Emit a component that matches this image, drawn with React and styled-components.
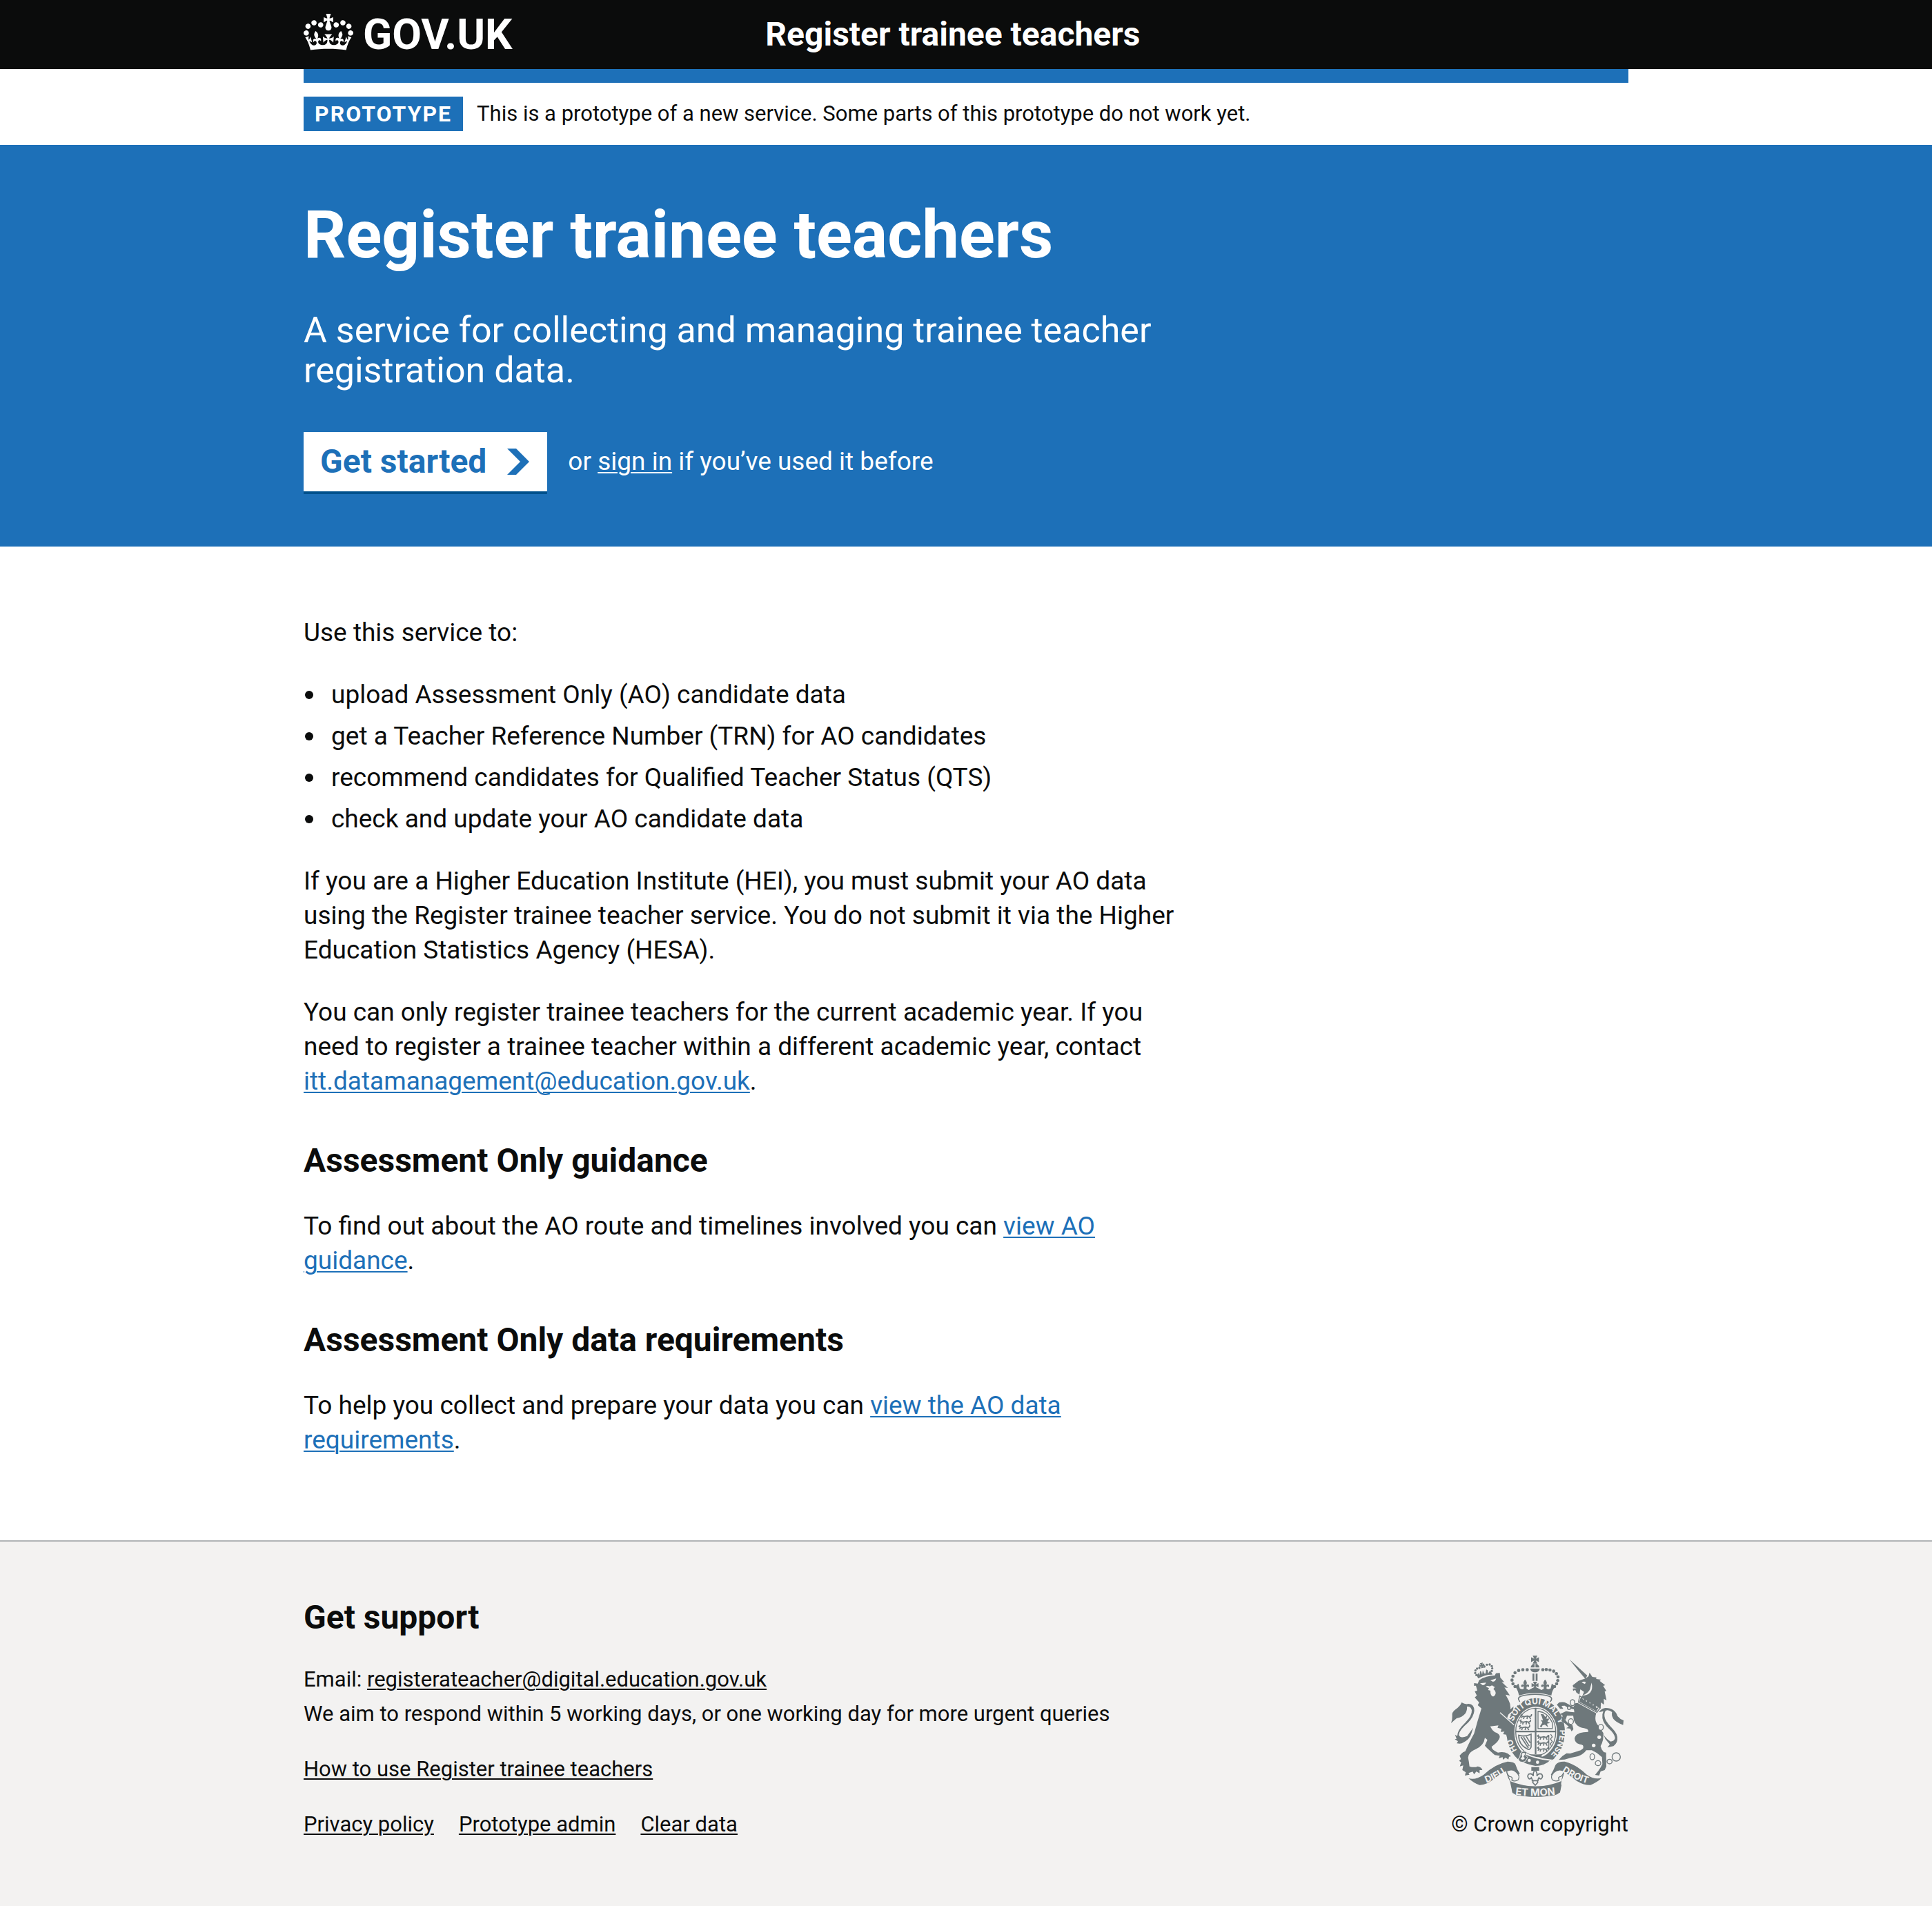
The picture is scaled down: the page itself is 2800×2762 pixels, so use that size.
import React from 'react';
import styled, { createGlobalStyle, css } from 'styled-components';

const color = {
  ink: '#0b0c0c',
  white: '#ffffff',
  blue: '#1d70b8',
  buttonShadow: '#00508c',
  footer: '#f3f2f1',
  border: '#b1b4b6',
  crest: '#6e787b',
};

const GlobalStyle = createGlobalStyle`
  *, *::before, *::after {
    box-sizing: border-box;
  }
  body {
    margin: 0;
    background: ${color.white};
    color: ${color.ink};
    font-family: Roboto, 'Liberation Sans', sans-serif;
    font-size: 37px;
    line-height: 50px;
  }
`;

const Page = styled.div`
  display: flex;
  flex-direction: column;
  min-height: 100vh;
`;

const Container = styled.div`
  max-width: 1920px;
  margin: 0 auto;

  @media (max-width: 2000px) {
    margin: 0 40px;
  }
`;

const Column = styled.div`
  max-width: 1280px;
`;

const linkColor = {
  body: color.blue,
  inverse: color.white,
  footer: color.ink,
};

const Link = styled.a`
  color: ${(p) => linkColor[p.$tone || 'body']};
  text-decoration: underline;
  text-decoration-thickness: 2px;
  text-underline-offset: 3px;
`;

/* Header */

const Header = styled.header`
  background: ${color.ink};
  color: ${color.white};
`;

const HeaderGrid = styled(Container)`
  display: grid;
  grid-template-columns: 1fr 2fr;
  gap: 44px;
  padding: 20px 0;
`;

const headerLink = css`
  color: ${color.white};
  font-weight: 700;
  line-height: 60px;
  text-decoration: none;
`;

const HomeLink = styled.a`
  ${headerLink}
  display: flex;
  gap: 14px;
  font-size: 62px;
`;

const ServiceName = styled.a`
  ${headerLink}
  font-size: 48px;
`;

const Crown = styled.svg`
  width: 72px;
  height: 53px;
  fill: currentColor;
`;

/* Phase banner */

const PhaseBanner = styled(Container)`
  display: flex;
  align-items: center;
  gap: 20px;
  padding: 20px 0;
  border-top: 20px solid ${color.blue};
  font-size: 31px;
  line-height: 40px;
`;

const Tag = styled.strong`
  padding: 5px 16px;
  background: ${color.blue};
  color: ${color.white};
  font-size: 32px;
  letter-spacing: 2px;
  text-transform: uppercase;
`;

/* Hero */

const Hero = styled.section`
  padding: 80px 0;
  background: ${color.blue};
  color: ${color.white};
`;

const HeroTitle = styled.h1`
  margin: 0 0 60px;
  font-size: 96px;
  font-weight: 700;
  line-height: 100px;
`;

const Lead = styled.p`
  margin: 0 0 60px;
  font-size: 52px;
  line-height: 58px;
`;

const Actions = styled.div`
  display: flex;
  align-items: center;
  gap: 30px;
`;

const StartButton = styled.button`
  display: flex;
  align-items: center;
  gap: 30px;
  padding: 13px 26px 13px 24px;
  border: 0;
  background: ${color.white};
  box-shadow: 0 4px 0 ${color.buttonShadow};
  color: ${color.blue};
  font-family: inherit;
  font-size: 48px;
  font-weight: 700;
  line-height: 60px;
  cursor: pointer;
`;

const Chevron = styled.svg`
  width: 32px;
  height: 38px;
  fill: currentColor;
`;

/* Body content */

const Main = styled.main`
  padding: 100px 0 80px;
`;

const Paragraph = styled.p`
  margin: 0 0 40px;
`;

const List = styled.ul`
  display: grid;
  gap: 10px;
  margin: 0 0 40px;
  padding: 0 2px;
  list-style: none;
`;

const ListItem = styled.li`
  display: flex;
  align-items: center;
  gap: 26px;

  &::before {
    content: '';
    width: 12px;
    height: 12px;
    border-radius: 50%;
    background: currentColor;
  }
`;

const Heading = styled.h2`
  margin: 0 0 40px;
  padding-top: ${(p) => (p.$spaced ? 20 : 0)}px;
  font-size: 48px;
  font-weight: 700;
  line-height: 60px;
`;

/* Footer */

const Footer = styled.footer`
  flex: 1;
  padding: 80px 0 90px;
  border-top: 2px solid ${color.border};
  background: ${color.footer};
  font-size: 31px;
  line-height: 40px;
`;

const FooterRow = styled(Container)`
  display: flex;
  align-items: flex-end;
  justify-content: space-between;
  gap: 60px;
`;

const FooterList = styled.ul`
  display: flex;
  flex-direction: ${(p) => (p.$inline ? 'row' : 'column')};
  gap: ${(p) => (p.$inline ? '10px 36px' : '10px')};
  margin: 0 0 ${(p) => (p.$last ? 0 : 40)}px;
  padding: 0;
  list-style: none;
`;

const Copyright = styled.a`
  display: flex;
  flex-direction: column;
  align-items: flex-start;
  gap: 20px;
  color: ${color.ink};
  text-decoration: none;
  white-space: nowrap;
`;

const CrestSvg = styled.svg`
  width: 250px;
  height: 205px;
  fill: ${color.crest};
`;

const CrestText = styled.text`
  fill: ${color.footer};
  font-family: Inter, sans-serif;
  font-size: ${(p) => p.$size}px;
  font-weight: 700;
  text-anchor: middle;
`;

const CrownIcon = () => (
  <Crown viewBox="0 0 132 97" aria-hidden="true">
    <path
      fillRule="evenodd"
      d="M25 30.2c3.5 1.5 7.7-.2 9.1-3.7 1.5-3.6-.2-7.8-3.9-9.2-3.6-1.4-7.6.3-9.1 3.9-1.4 3.5.3 7.5 3.9 9zM9 39.5c3.6 1.5 7.8-.2 9.2-3.7 1.5-3.6-.2-7.8-3.9-9.1-3.6-1.5-7.6.2-9.1 3.8-1.4 3.5.3 7.5 3.8 9zM4.4 57.2c3.5 1.5 7.7-.2 9.1-3.8 1.5-3.6-.2-7.7-3.9-9.1-3.5-1.5-7.6.3-9.1 3.8-1.4 3.5.3 7.6 3.9 9.1zm38.3-21.4c3.5 1.5 7.7-.2 9.1-3.8 1.5-3.6-.2-7.7-3.9-9.1-3.6-1.5-7.6.3-9.1 3.8-1.3 3.6.4 7.7 3.9 9.1zm64.4-5.6c-3.6 1.5-7.8-.2-9.1-3.7-1.5-3.6.2-7.8 3.8-9.2 3.6-1.4 7.7.3 9.2 3.9 1.3 3.5-.4 7.5-3.9 9zm15.9 9.3c-3.6 1.5-7.7-.2-9.1-3.7-1.5-3.6.2-7.8 3.7-9.1 3.6-1.5 7.7.2 9.2 3.8 1.5 3.5-.3 7.5-3.8 9zm4.7 17.7c-3.6 1.5-7.8-.2-9.2-3.8-1.5-3.6.2-7.7 3.9-9.1 3.6-1.5 7.7.3 9.2 3.8 1.3 3.5-.4 7.6-3.9 9.1zM89.3 35.8c-3.6 1.5-7.8-.2-9.2-3.8-1.4-3.6.2-7.7 3.9-9.1 3.6-1.5 7.7.3 9.2 3.8 1.4 3.6-.3 7.7-3.9 9.1zM69.7 17.7l8.9 4.7V9.3l-8.9 2.8c-.2-.3-.5-.6-.9-.9L72.4 0H59.6l3.5 11.2c-.3.3-.6.5-.9.9l-8.8-2.8v13.1l8.8-4.7c.3.3.6.7.9.9l-5 15.4v.1c-.2.8-.4 1.6-.4 2.4 0 4.1 3.1 7.5 7 8.1h.2c.3 0 .7.1 1 .1.4 0 .7 0 1-.1h.2c4-.6 7.1-4.1 7.1-8.1 0-.8-.1-1.7-.4-2.4V34l-5.1-15.4c.4-.2.7-.6 1-.9zM66 92.8c16.9 0 32.8 1.1 47.1 3.2 4-16.9 8.9-26.7 14-33.5l-9.6-3.4c1 4.9 1.1 7.2 0 10.2-1.5-1.4-3-4.3-4.2-8.7L108.6 76c2.8-2 5-3.2 7.5-3.3-4.4 9.4-10 11.9-13.6 11.2-4.3-.8-6.3-4.6-5.6-7.9 1-4.7 5.7-5.9 8-.5 4.3-8.7-3-11.4-7.6-8.8 7.1-7.2 7.9-13.5 2.1-21.1-8 6.1-8.1 12.3-4.5 20.8-4.7-5.4-12.1-2.5-9.5 6.2 3.4-5.2 7.9-2 7.2 3.1-.6 4.3-6.4 7.8-13.5 7.2-10.3-.9-10.9-8-11.2-13.8 2.5-.5 7.1 1.8 11 7.3L80.2 60c-4.1 4.4-8 5.3-12.3 5.4 1.4-4.4 8-11.6 8-11.6H55.5s6.4 7.2 7.9 11.6c-4.2-.1-8-1-12.3-5.4l1.4 16.4c3.9-5.5 8.5-7.7 10.9-7.3-.3 5.8-.9 12.8-11.1 13.8-7.2.6-12.9-2.9-13.5-7.2-.7-5 3.8-8.3 7.1-3.1 2.7-8.7-4.6-11.6-9.4-6.2 3.7-8.5 3.6-14.7-4.6-20.8-5.8 7.6-5 13.9 2.2 21.1-4.7-2.6-11.9.1-7.7 8.8 2.3-5.5 7.1-4.2 8.1.5.7 3.3-1.3 7.1-5.7 7.9-3.5.7-9-1.8-13.5-11.2 2.5.1 4.7 1.3 7.5 3.3l-4.7-15.4c-1.2 4.4-2.7 7.2-4.3 8.7-1.1-3-.9-5.3 0-10.2l-9.5 3.4c5 6.9 9.9 16.7 14 33.5 14.8-2.1 30.8-3.2 47.7-3.2z"
    />
  </Crown>
);

const pearls = [
  [403, 120], [384, 120], [366, 123], [350, 133], [341, 148], [337, 165], [341, 181], [350, 193],
  [471, 120], [486, 119], [502, 121], [518, 126], [530, 137], [537, 151], [536, 167], [531, 181], [522, 193],
];
const headPearls = [[182, 143], [177, 134], [178, 123], [185, 115], [195, 112], [217, 106], [228, 98], [240, 97], [249, 104], [251, 114], [249, 125]];
const bezants = [[600, 263, 10, 13], [585, 286, 7, 7], [593, 345, 11, 12], [723, 370, 11, 13], [686, 498, 10, 13], [711, 526, 12, 11], [761, 519, 11, 10], [790, 499, 18, 18]];

const CrossPattee = ({ x, y, r }) => (
  <path
    transform={`translate(${x} ${y}) scale(${r / 10})`}
    d="M-6 -10H6L2 -2L10 -6V6L2 2L6 10H-6L-2 2L-10 6V-6L-2 -2Z"
  />
);

const Fleur = ({ x, y }) => (
  <path
    transform={`translate(${x} ${y})`}
    d="M0 -18C9 -9 9 -2 4 6C11 0 19 3 17 11C15 17 9 14 9 10C6 13 6 17 6 21H-6C-6 17 -6 13 -9 10C-9 14 -15 17 -17 11C-19 3 -11 0 -4 6C-9 -2 -9 -9 0 -18Z"
  />
);

const Passant = ({ x, y }) => (
  <path
    transform={`translate(${x} ${y})`}
    fill="none"
    stroke={color.crest}
    strokeWidth="5"
    d="M0 12L4 4L12 6L26 3L34 6L40 16M12 6L9 16M26 5L24 16M34 6L43 2L44 -5M4 4L-2 0L4 -5"
  />
);

const RoyalArms = () => (
  <CrestSvg viewBox="72 58 750 615" aria-hidden="true">
    <defs>
      <path id="garter" d="M335 392A105 123 0 0 1 545 392A105 123 0 0 1 335 392" />
      <path id="ribbon-left" d="M200 620Q268 602 330 552" />
      <path id="ribbon-mid" d="M336 661Q440 676 540 661" />
      <path id="ribbon-right" d="M540 552Q604 600 682 618" />
    </defs>

    {/* crown above the shield */}
    <CrossPattee x={437} y={76} r={17} />
    <path d="M418 110C420 99 427 94 435 94V110ZM439 94C448 94 454 100 456 110H439ZM416 115H458C456 125 450 131 437 131C424 131 418 125 416 115Z" />
    {pearls.map(([x, y]) => (
      <circle key={`${x}-${y}`} cx={x} cy={y} r="7" />
    ))}
    <path d="M426 137H434V168H426ZM440 137H448V168H440Z" />
    <CrossPattee x={437} y={187} r={15} />
    <Fleur x={394} y={181} />
    <Fleur x={481} y={181} />
    <path d="M351 192L365 180L371 201L381 205L395 200L410 208L427 199H448L465 208L480 200L495 205L505 201L510 180L525 192C514 206 510 218 508 232C462 218 412 218 367 232C365 218 361 206 351 192Z" />
    <path fill="none" stroke={color.crest} strokeWidth="5" d="M376 235C412 224 462 224 498 235C512 240 512 250 503 259M376 235C362 240 362 248 371 259" />

    {/* garter and quartered shield */}
    <path fillRule="evenodd" d="M440 243A127 148 0 1 1 439.900 243ZM440 281A93 111 0 1 0 440.100 281Z" />
    <ellipse cx="440" cy="390" rx="87" ry="103" fill="none" stroke={color.crest} strokeWidth="4" />
    <path d="M436 286H443V487H436ZM353 385H527V392H353Z" />
    <Passant x={378} y={318} />
    <Passant x={374} y={342} />
    <Passant x={370} y={366} />
    <path fill="none" stroke={color.crest} strokeWidth="4" d="M450 301Q490 303 512 350V376H450Z" />
    <path d="M458 366L469 350L462 338L472 341L466 322L461 312L474 314L481 325L490 318L487 333L500 332L491 345L503 351L489 354L494 370L480 359L470 361L465 371Z" />
    <path fill="none" stroke={color.crest} strokeWidth="5" d="M366 405Q393 413 420 400V456Q414 472 402 463Q366 445 366 405ZM376 412L408 460M387 412L412 452M399 410L416 438" />
    <Passant x={450} y={408} />
    <Passant x={450} y={434} />
    <Passant x={450} y={460} />
    <path fill="none" stroke={color.crest} strokeWidth="4" d="M497 404V466M505 400L512 412L504 421L512 432L503 442L508 450" />
    <path d="M416 488H466V500H416Z" />
    <CrestText $size={36}><textPath href="#garter" startOffset="90">SOIT</textPath></CrestText>
    <CrestText $size={36}><textPath href="#garter" startOffset="167">QUI</textPath></CrestText>
    <CrestText $size={36}><textPath href="#garter" startOffset="247">MAL</textPath></CrestText>
    <CrestText $size={36}><textPath href="#garter" startOffset="311">Y</textPath></CrestText>
    <CrestText $size={36}><textPath href="#garter" startOffset="407">PENSE</textPath></CrestText>
    <CrestText $size={36}><textPath href="#garter" startOffset="661">HO</textPath></CrestText>
    <path stroke={color.footer} strokeWidth="6" d="M391 483Q440 508 508 513Q480 541 438 541Q404 536 372 520Z" />
    <path stroke={color.footer} strokeWidth="3" d="M374 482Q388 466 403 480L396 491L405 501L394 519Q370 528 364 508L371 499Z" />
    <path fill={color.footer} d="M379 485Q388 477 395 484L387 498L393 505Q383 517 374 506L381 499Z" />
    <circle cx="412" cy="514" r="7" fill={color.footer} />
    <circle cx="448" cy="522" r="7" fill={color.footer} />

    {/* lion */}
    {headPearls.map(([x, y]) => (
      <circle key={`${x}-${y}`} cx={x} cy={y} r="5" />
    ))}
    <g transform="rotate(-13 206 101)">
      <CrossPattee x={206} y={101} r={11} />
    </g>
    <path d="M184 146L190 134L196 143L198 126L203 128L207 141L210 122L216 136L222 137L225 119L231 122L233 136L241 124L248 132L252 141Q219 140 190 158Z" />
    <path d="M172 178L188 180L194 165Q225 145 262 145L267 135L284 134L286 154L304 174L292 173L319 199L304 197L328 232L309 228L322 252Q332 270 330 292L344 279L340 298L322 314L316 328Q330 350 342 372L348 404L338 398L336 416L327 404L316 415L312 402L298 400L304 389L288 390L291 377L274 372L278 362L242 366Q250 382 262 391Q284 398 284 412Q282 430 248 455Q250 470 276 480Q300 474 318 484L333 496L324 498L321 510L309 502L298 511L296 500L279 505L284 494L262 491L228 460L219 450L230 425L219 416Q215 450 178 466Q146 480 146 502Q150 520 152 540Q172 547 188 540Q206 544 208 556L196 556L196 570L182 562L172 575L166 563L148 569L152 576L132 580L136 566L121 556L125 536L110 540L116 522L107 516L115 508L109 494Q120 478 134 474Q154 430 172 398Q186 345 204 288L188 274L194 262L175 240L184 232L175 214L186 210L180 189L172 190Z" />
    <path fill={color.footer} d="M198 179L224 176Q221 187 209 187ZM243 166L268 158Q266 170 254 172ZM223 194Q229 187 240 192L250 188L262 195L256 204Q266 211 266 222Q263 236 252 236Q242 230 243 211L233 208L237 200Z" />
    <path fill="none" stroke={color.footer} strokeWidth="4" d="M285 306L346 360" />
    <path fill="none" stroke={color.crest} strokeWidth="3" d="M318 310L343 287M330 322L344 310" />
    <path d="M72 352Q78 336 77 322Q74 304 92 292Q112 278 118 262Q134 272 148 268Q173 270 173 298Q170 325 146 350Q108 382 106 402Q110 421 142 408L168 372L160 398Q154 422 124 437Q118 443 97 440L102 431L88 422L96 420L89 402L99 408Q98 384 134 350Q164 320 162 296Q158 278 141 280Q143 296 134 310Q122 326 96 331Z" />

    {/* unicorn */}
    <path d="M587 75L664 145L656 160Q620 118 587 75Z" />
    <path d="M601 188L626 168L658 157L670 148L674 132L686 151L704 153L703 160L724 163L718 168L742 187L733 190L747 212L740 215L748 253L736 246L737 272L724 262L722 290L706 278L690 284L688 268L672 272L664 252L640 240L650 216L634 205L630 228L617 219L612 207L603 212L601 202L618 200L603 197Z" />
    <path fill={color.footer} d="M640 176Q648 168 658 174L654 182ZM683 176Q690 205 676 220Q664 232 643 232Q670 220 676 204Z" />
    <path fill={color.footer} stroke={color.crest} strokeWidth="4" d="M631 234L720 286L706 305L626 261Z" />
    <path d="M634 245L640 236L646 251L655 242L660 260L670 250L675 267L686 259L689 276L701 269L702 285L714 284L704 300L630 259Z" />
    <path d="M622 264L703 309Q693 340 711 362L734 395Q736 420 728 440L722 452Q724 465 736 478L746 480L747 540L740 556L722 562L716 580L698 577L712 560L722 545L730 530L728 500L706 482L684 470L660 470Q650 486 624 496L592 503L566 510L540 512L556 495L574 483L590 484L636 470L646 462Q650 448 640 446Q610 442 609 418Q614 396 648 392L668 390Q672 378 650 374Q620 372 606 340L603 320L576 320L570 338L560 330L556 318L546 312L572 300Q590 304 608 305L606 292L580 285L566 276L552 277L560 290L546 290L532 272L542 262Q560 258 572 264L604 282L612 266Z" />
    <path d="M556 322L578 350L600 362L604 378L596 388L590 376L572 374L584 368L566 352L552 344Z" />
    <path d="M714 305Q728 286 744 286Q784 286 796 322Q808 336 822 340L820 360Q792 350 778 334Q768 318 772 304Q756 292 744 298Q734 312 742 334Q750 352 776 378Q798 400 795 424Q792 442 778 452L752 458L762 444L742 420L736 404Q750 424 766 432Q784 430 785 416Q782 398 762 380Q734 354 730 330Q728 312 734 300Z" />
    {bezants.map(([x, y, rx, ry]) => (
      <ellipse key={`${x}-${y}`} cx={x} cy={y} rx={rx} ry={ry} fill={color.footer} stroke={color.crest} strokeWidth="4" />
    ))}
    <g fill={color.footer}>
      <circle cx="716" cy="413" r="8" />
      <circle cx="692" cy="449" r="8" />
    </g>

    {/* motto ribbon and badge */}
    <path d="M148 592Q180 600 214 576Q262 530 318 519Q348 520 352 532Q358 552 371 572L362 577Q350 558 326 557Q290 566 262 592Q226 622 196 621Q172 614 148 592Z" />
    <path d="M728 590Q696 600 662 576Q614 530 566 519Q536 518 526 534Q518 556 506 576L516 582Q530 558 550 557Q590 580 614 600Q646 622 678 621Q704 612 728 590Z" />
    <path fill={color.footer} stroke={color.crest} strokeWidth="4" d="M314 560Q340 548 356 566Q374 582 364 598Q350 608 336 600Q342 584 326 584Q314 574 314 560ZM562 560Q540 548 520 566Q502 582 512 598Q526 608 542 600Q534 584 550 584Q562 574 562 560Z" />
    <path d="M312 562Q320 598 334 612Q440 642 544 612Q560 596 564 562Q554 580 552 600Q544 606 552 622L546 652Q534 664 520 666Q440 678 360 666Q344 662 338 650Q334 600 312 562Z" />
    <path d="M328 604Q440 650 552 604L545 654Q440 690 339 656Z" />
    <path d="M421 543H455V559H421Z" />
    <path fill={color.footer} stroke={color.crest} strokeWidth="5" d="M437 556Q448 566 445 582Q452 568 466 574Q474 584 464 594Q456 596 454 589Q450 594 450 602H447L449 610L438 622L427 610L429 602H425Q425 594 421 589Q419 596 411 594Q401 584 409 574Q423 568 430 582Q427 566 437 556ZM424 602H452" />
    <CrestText $size={40}><textPath href="#ribbon-left" startOffset="50%">DIEU</textPath></CrestText>
    <CrestText $size={44}><textPath href="#ribbon-mid" startOffset="50%">ET MON</textPath></CrestText>
    <CrestText $size={40}><textPath href="#ribbon-right" startOffset="50%">DROIT</textPath></CrestText>
  </CrestSvg>
);

export default function App() {
  return (
    <Page>
      <GlobalStyle />

      <Header>
        <HeaderGrid>
          <HomeLink href="#">
            <CrownIcon />
            <span>GOV.UK</span>
          </HomeLink>
          <ServiceName href="#">Register trainee teachers</ServiceName>
        </HeaderGrid>
      </Header>

      <div>
        <PhaseBanner>
          <Tag>Prototype</Tag>
          <span>
            This is a prototype of a new service. Some parts of this prototype do not work yet.
          </span>
        </PhaseBanner>
      </div>

      <Hero>
        <Container>
          <Column>
            <HeroTitle>Register trainee teachers</HeroTitle>
            <Lead>A service for collecting and managing trainee teacher registration data.</Lead>
            <Actions>
              <StartButton type="button">
                Get started
                <Chevron viewBox="0 0 32 38" aria-hidden="true">
                  <path d="M0 0H13L32 19L13 38H0L19 19Z" />
                </Chevron>
              </StartButton>
              <span>
                or <Link href="#" $tone="inverse">sign in</Link> if you’ve used it before
              </span>
            </Actions>
          </Column>
        </Container>
      </Hero>

      <Main>
        <Container>
          <Column>
            <Paragraph>Use this service to:</Paragraph>
            <List>
              <ListItem>upload Assessment Only (AO) candidate data</ListItem>
              <ListItem>get a Teacher Reference Number (TRN) for AO candidates</ListItem>
              <ListItem>recommend candidates for Qualified Teacher Status (QTS)</ListItem>
              <ListItem>check and update your AO candidate data</ListItem>
            </List>
            <Paragraph>
              If you are a Higher Education Institute (HEI), you must submit your AO data using the
              Register trainee teacher service. You do not submit it via the Higher Education
              Statistics Agency (HESA).
            </Paragraph>
            <Paragraph>
              You can only register trainee teachers for the current academic year. If you need to
              register a trainee teacher within a different academic year, contact{' '}
              <Link href="#">itt.datamanagement@education.gov.uk</Link>.
            </Paragraph>

            <Heading $spaced>Assessment Only guidance</Heading>
            <Paragraph>
              To find out about the AO route and timelines involved you can{' '}
              <Link href="#">view AO guidance</Link>.
            </Paragraph>

            <Heading $spaced>Assessment Only data requirements</Heading>
            <Paragraph>
              To help you collect and prepare your data you can{' '}
              <Link href="#">view the AO data requirements</Link>.
            </Paragraph>
          </Column>
        </Container>
      </Main>

      <Footer>
        <FooterRow>
          <div>
            <Heading>Get support</Heading>
            <FooterList>
              <li>
                Email: <Link href="#" $tone="footer">registerateacher@digital.education.gov.uk</Link>
              </li>
              <li>We aim to respond within 5 working days, or one working day for more urgent queries</li>
            </FooterList>
            <FooterList>
              <li><Link href="#" $tone="footer">How to use Register trainee teachers</Link></li>
            </FooterList>
            <FooterList $inline $last>
              <li><Link href="#" $tone="footer">Privacy policy</Link></li>
              <li><Link href="#" $tone="footer">Prototype admin</Link></li>
              <li><Link href="#" $tone="footer">Clear data</Link></li>
            </FooterList>
          </div>
          <Copyright href="#">
            <RoyalArms />
            <span>© Crown copyright</span>
          </Copyright>
        </FooterRow>
      </Footer>
    </Page>
  );
}
